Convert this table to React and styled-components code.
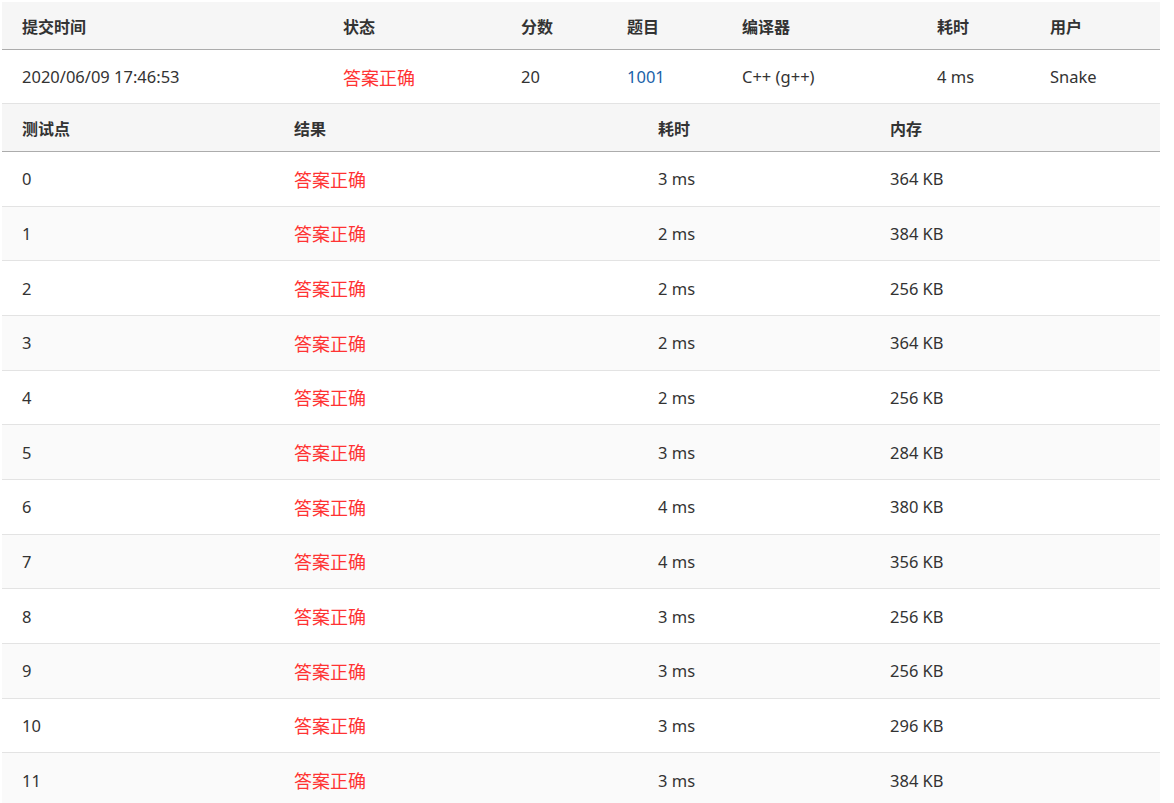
import styled, { createGlobalStyle } from 'styled-components';

const GlobalStyle = createGlobalStyle`
  html, body {
    margin: 0;
    padding: 0;
    background: #fff;
  }
  body {
    font-family: "Noto Sans", "Noto Sans CJK SC", sans-serif;
    color: #333;
  }
`;

const Page = styled.div`
  padding: 2px 0 0 2px;
  width: 1158px;
`;

const Table = styled.div`
  display: flex;
  flex-direction: column;
`;

const Row = styled.div`
  display: grid;
  grid-template-columns: ${({ cols }) => cols};
  align-items: center;
  box-sizing: border-box;
  height: ${({ h }) => h};
  background: ${({ head, striped }) => (head ? '#f6f6f6' : striped ? '#fafafa' : '#fff')};
  border-bottom: 1px solid ${({ head }) => (head ? '#acacac' : '#e3e3e3')};
`;

const HeadCell = styled.div`
  padding-left: 20px;
  font-size: 16px;
  font-weight: 700;
  color: #333;
  white-space: nowrap;
`;

const Cell = styled.div`
  padding-left: 20px;
  font-size: 16.5px;
  color: ${({ tone }) => (tone === 'link' ? '#1a62a8' : '#333')};
  white-space: nowrap;
`;

const Status = styled.div`
  padding-left: 20px;
  font-size: 18px;
  color: #ff3333;
  white-space: nowrap;
`;

const topCols = '321px 178px 106px 115px 195px 113px 130px';
const caseCols = '272px 364px 232px 290px';

const cases = [
  ['0', 3, 364],
  ['1', 2, 384],
  ['2', 2, 256],
  ['3', 2, 364],
  ['4', 2, 256],
  ['5', 3, 284],
  ['6', 4, 380],
  ['7', 4, 356],
  ['8', 3, 256],
  ['9', 3, 256],
  ['10', 3, 296],
  ['11', 3, 384],
];

const App = () => (
  <Page>
    <GlobalStyle />
    <Table>
      <Row head cols={topCols} h="48px">
        <HeadCell>提交时间</HeadCell>
        <HeadCell>状态</HeadCell>
        <HeadCell>分数</HeadCell>
        <HeadCell>题目</HeadCell>
        <HeadCell>编译器</HeadCell>
        <HeadCell>耗时</HeadCell>
        <HeadCell>用户</HeadCell>
      </Row>
      <Row cols={topCols} h="54px">
        <Cell>2020/06/09 17:46:53</Cell>
        <Status>答案正确</Status>
        <Cell>20</Cell>
        <Cell tone="link">1001</Cell>
        <Cell>C++ (g++)</Cell>
        <Cell>4 ms</Cell>
        <Cell>Snake</Cell>
      </Row>
      <Row head cols={caseCols} h="48px">
        <HeadCell>测试点</HeadCell>
        <HeadCell>结果</HeadCell>
        <HeadCell>耗时</HeadCell>
        <HeadCell>内存</HeadCell>
      </Row>
      {cases.map(([id, time, mem], i) => (
        <Row key={id} cols={caseCols} h="54.67px" striped={i % 2 === 1}>
          <Cell>{id}</Cell>
          <Status>答案正确</Status>
          <Cell>{time} ms</Cell>
          <Cell>{mem} KB</Cell>
        </Row>
      ))}
    </Table>
  </Page>
);

export default App;
